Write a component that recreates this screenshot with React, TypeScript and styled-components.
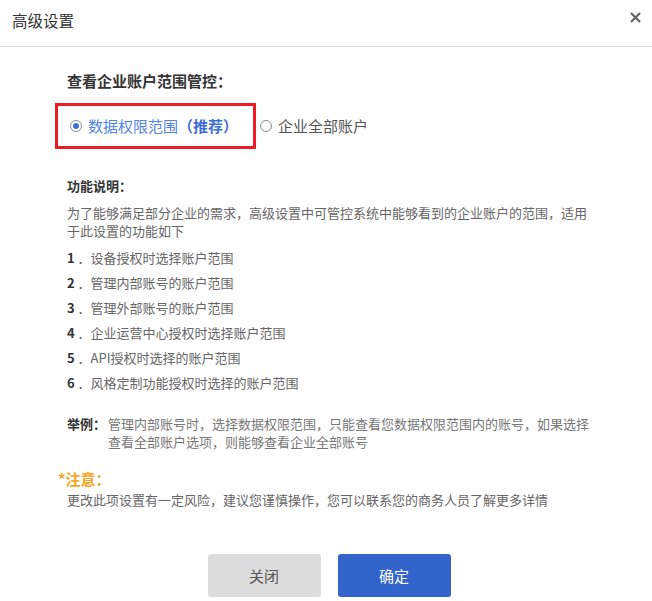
import React from "react";
import styled, { createGlobalStyle } from "styled-components";

const GlobalStyle = createGlobalStyle`
  html, body {
    margin: 0;
    padding: 0;
    background: #ffffff;
  }
  body {
    font-family: "Noto Sans CJK SC", "Noto Sans", sans-serif;
    color: #333;
  }
`;

const Dialog = styled.div`
  width: 652px;
  height: 601px;
  background: #fff;
  display: flex;
  flex-direction: column;
  box-sizing: border-box;
`;

const Header = styled.div`
  border-bottom: 1px solid #d9d9d9;
  display: flex;
  justify-content: space-between;
  align-items: flex-start;
  padding: 10px 10px 0 12px;
  height: 36px;
`;

const Title = styled.div`
  font-size: 15.5px;
  line-height: 20px;
  color: #333;
`;

const CloseButton = styled.button`
  border: none;
  background: transparent;
  padding: 0;
  margin: 0;
  width: 14px;
  height: 14px;
  display: flex;
  align-items: center;
  justify-content: center;
  cursor: pointer;
`;

const Body = styled.div`
  padding: 24px 0 0 67px;
  width: 526px;
  display: flex;
  flex-direction: column;
`;

const Heading = styled.div`
  font-size: 15px;
  font-weight: 700;
  line-height: 20px;
  color: #333;
`;

const SubHeading = styled.div`
  font-size: 13px;
  font-weight: 700;
  line-height: 20px;
  color: #333;
  margin-top: 27px;
`;

const OptionRow = styled.div`
  display: flex;
  align-items: center;
  margin: 12px 0 0 -12px;
`;

const Highlight = styled.div`
  border: 3px solid #ec1c24;
  height: 40px;
  display: flex;
  align-items: center;
  padding: 0 15px 0 12px;
  margin-right: 4px;
`;

const Option = styled.label<{ $active?: boolean }>`
  display: flex;
  align-items: center;
  gap: 6px;
  font-size: 15px;
  line-height: 20px;
  color: ${(p) => (p.$active ? "#5283e6" : "#555")};
  cursor: pointer;
`;

const RadioCircle = styled.span<{ $checked?: boolean }>`
  width: 12px;
  height: 12px;
  border-radius: 50%;
  border: 1px solid #8c8c8c;
  box-sizing: border-box;
  position: relative;
  flex: none;
  background: #fff;
  &::after {
    content: "";
    display: ${(p) => (p.$checked ? "block" : "none")};
    position: absolute;
    left: 2px;
    top: 2px;
    width: 6px;
    height: 6px;
    border-radius: 50%;
    background: #3c6ed6;
  }
`;

const Recommend = styled.span`
  font-weight: 700;
  color: #3d6cd9;
`;

const Paragraph = styled.p`
  margin: 8px 0 0 0;
  font-size: 13px;
  line-height: 18px;
  color: #666;
`;

const List = styled.ol`
  list-style: none;
  margin: 5px 0 0 0;
  padding: 0;
`;

const ListItem = styled.li`
  font-size: 13px;
  line-height: 25px;
  color: #666;
`;

const Num = styled.b`
  color: #333;
  font-weight: 700;
`;

const ExampleRow = styled.div`
  display: flex;
  margin-top: 20px;
  font-size: 13px;
  line-height: 18px;
`;

const ExampleLabel = styled.span`
  flex: none;
  width: 41px;
  font-weight: 700;
  color: #333;
`;

const ExampleText = styled.span`
  color: #777;
`;

const Notice = styled.div`
  margin: 18px 0 0 -9px;
  font-size: 15px;
  font-weight: 700;
  line-height: 20px;
  color: #f7a422;
`;

const NoticeText = styled.div`
  margin-top: 2px;
  font-size: 13px;
  line-height: 18px;
  color: #666;
`;

const Footer = styled.div`
  margin-top: auto;
  padding: 0 0 4px 6px;
  display: flex;
  justify-content: center;
  gap: 17px;
`;

const Button = styled.button<{ $primary?: boolean }>`
  width: 113px;
  height: 43px;
  border: none;
  border-radius: 3px;
  font-family: "Noto Sans CJK SC", sans-serif;
  font-size: 15px;
  cursor: pointer;
  background: ${(p) => (p.$primary ? "#3264cc" : "#dcdcdc")};
  color: ${(p) => (p.$primary ? "#ffffff" : "#555")};
`;

const items = [
  "设备授权时选择账户范围",
  "管理内部账号的账户范围",
  "管理外部账号的账户范围",
  "企业运营中心授权时选择账户范围",
  "API授权时选择的账户范围",
  "风格定制功能授权时选择的账户范围",
];

export default function App() {
  return (
    <>
      <GlobalStyle />
      <Dialog>
        <Header>
          <Title>高级设置</Title>
          <CloseButton aria-label="关闭">
            <svg width="11" height="11" viewBox="0 0 11 11">
              <path d="M1 1L10 10M10 1L1 10" stroke="#666" strokeWidth="2.2" />
            </svg>
          </CloseButton>
        </Header>
        <Body>
          <Heading>查看企业账户范围管控：</Heading>
          <OptionRow>
            <Highlight>
              <Option $active>
                <RadioCircle $checked />
                <span>
                  数据权限范围<Recommend>（推荐）</Recommend>
                </span>
              </Option>
            </Highlight>
            <Option>
              <RadioCircle />
              <span>企业全部账户</span>
            </Option>
          </OptionRow>
          <SubHeading>功能说明：</SubHeading>
          <Paragraph>
            为了能够满足部分企业的需求，高级设置中可管控系统中能够看到的企业账户的范围，适用于此设置的功能如下
          </Paragraph>
          <List>
            {items.map((t, i) => (
              <ListItem key={i}>
                <Num>{i + 1}</Num> ．{t}
              </ListItem>
            ))}
          </List>
          <ExampleRow>
            <ExampleLabel>举例：</ExampleLabel>
            <ExampleText>
              管理内部账号时，选择数据权限范围，只能查看您数据权限范围内的账号，如果选择查看全部账户选项，则能够查看企业全部账号
            </ExampleText>
          </ExampleRow>
          <Notice>*注意：</Notice>
          <NoticeText>
            更改此项设置有一定风险，建议您谨慎操作，您可以联系您的商务人员了解更多详情
          </NoticeText>
        </Body>
        <Footer>
          <Button>关闭</Button>
          <Button $primary>确定</Button>
        </Footer>
      </Dialog>
    </>
  );
}
